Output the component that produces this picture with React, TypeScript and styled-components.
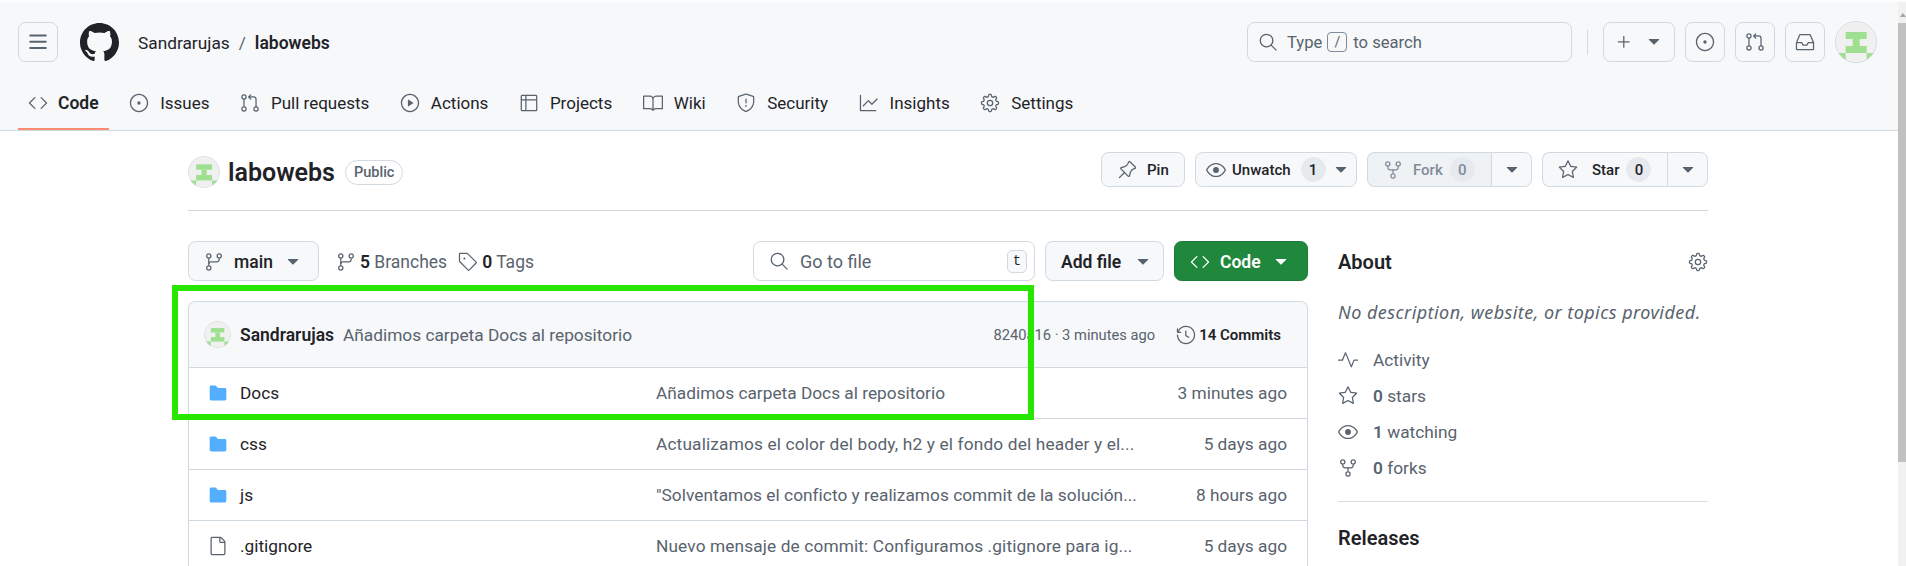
import React from "react";
import styled, { createGlobalStyle } from "styled-components";
import {
  GoCode, GoIssueOpened, GoGitPullRequest, GoPlay, GoTable, GoBook, GoShield,
  GoGraph, GoGear, GoSearch, GoPlus, GoTriangleDown, GoInbox, GoPin, GoEye, GoRepoForked, GoStar,
  GoGitBranch, GoTag, GoHistory, GoPulse, GoFileDirectoryFill, GoFile,
} from "react-icons/go";

const FONT = `Roboto, "Noto Sans", "Liberation Sans", sans-serif`;
const INK = "#1f2328";
const MUTED = "#59636e";
const LINE = "#d1d9e0";
const WASH = "#f6f8fa";

const Global = createGlobalStyle`
  html, body { margin: 0; padding: 0; height: 100%; overflow: hidden; background: #fff; }
  body { font-family: ${FONT}; font-size: 17.3px; color: ${INK}; }
  * { box-sizing: border-box; }
  svg { display: block; flex: none; }
`;

const Page = styled.div`
  position: relative;
  display: flex;
  width: 1906px;
  height: 566px;
  overflow: hidden;
`;
const Main = styled.div`
  flex: 1;
  min-width: 0;
`;
const Rail = styled.div`
  width: 8px;
  background: #f1f1f1;
  border-top: 2px solid #fdfcff;
  padding-top: 11px;
  display: flex;
  flex-direction: column;
  align-items: center;
`;
const RailArrow = styled.span`
  width: 0;
  height: 0;
  margin-left: 1px;
  border-left: 3px solid transparent;
  border-right: 3px solid transparent;
  border-bottom: 4px solid #a3a3a3;
`;
const Thumb = styled.div`
  align-self: stretch;
  height: 439px;
  margin-top: 6px;
  background: #c1c1c1;
`;
const Highlight = styled.div`
  position: absolute;
  left: 172px;
  top: 285px;
  width: 862px;
  height: 135px;
  border: 6px solid #27e600;
  pointer-events: none;
`;

const Header = styled.header`
  background: ${WASH};
  border-top: 2px solid #fdfcff;
  border-bottom: 1px solid ${LINE};
  height: 131px;
`;
const TopRow = styled.div`
  display: flex;
  align-items: center;
  height: 60px;
  padding: 20px 21px 0 18px;
`;
const IconBtn = styled.div`
  width: 40px;
  height: 40px;
  border: 1px solid ${LINE};
  border-radius: 7.5px;
  display: flex;
  align-items: center;
  justify-content: center;
  color: ${MUTED};
`;
const Logo = styled.div`
  margin-left: 22px;
  color: ${INK};
`;
const Crumbs = styled.div`
  margin-left: 19px;
  padding-top: 2px;
  display: flex;
  align-items: center;
  flex: 1;
`;
const Slash = styled.span`
  color: ${MUTED};
  margin: 0 9px;
`;
const Strong = styled.span`
  font-size: 17.5px;
  font-weight: 600;
`;
const SearchBox = styled.div`
  width: 325px;
  height: 40px;
  border: 1px solid ${LINE};
  border-radius: 7.5px;
  display: flex;
  align-items: center;
  padding-left: 10px;
  gap: 5px;
  color: ${MUTED};
`;
const SearchText = styled.span<{ $lead: number }>`
  font-size: 16.6px;
  padding-top: 1px;
  margin-left: ${(p) => p.$lead}px;
`;
const SlashKey = styled.span`
  width: 20px;
  height: 20px;
  border: 1px solid #818b98;
  border-radius: 4px;
  font-size: 14px;
  display: flex;
  align-items: center;
  justify-content: center;
`;
const Divider = styled.span`
  width: 1px;
  height: 25px;
  background: ${LINE};
  margin: 0 15px;
`;
const ToolGroup = styled.div`
  display: flex;
  align-items: center;
  gap: 10px;
`;
const PlusBtn = styled(IconBtn)`
  width: 72px;
  gap: 10px;
`;
const Avatar = styled.svg<{ $size: number }>`
  width: ${(p) => p.$size}px;
  height: ${(p) => p.$size}px;
  border-radius: 50%;
`;
const Tabs = styled.nav`
  display: flex;
  gap: 10.5px;
  padding: 21px 0 0 18px;
`;
const Tab = styled.div<{ $active?: boolean }>`
  display: flex;
  align-items: center;
  gap: ${(p) => (p.$active ? 10 : 11)}px;
  height: 47px;
  padding: 0 10px 5px;
  border-bottom: 2.5px solid ${(p) => (p.$active ? "#fd8c73" : "transparent")};
  font-size: ${(p) => (p.$active ? 17.5 : 17)}px;
  font-weight: ${(p) => (p.$active ? 600 : 400)};
  color: ${INK};
  svg { color: ${MUTED}; }
`;

const Container = styled.div`
  width: 1520px;
  margin-left: 188px;
`;
const RepoHead = styled.div`
  display: flex;
  justify-content: space-between;
  height: 80px;
  padding-top: 21px;
  border-bottom: 1px solid ${LINE};
`;
const RepoTitle = styled.div`
  display: flex;
  align-items: center;
  height: 40px;
  gap: 8px;
`;
const RepoName = styled.span`
  font-size: 25px;
  font-weight: 600;
  margin-right: 2px;
`;
const Badge = styled.span`
  height: 25px;
  padding: 0 8px;
  border: 1px solid ${LINE};
  border-radius: 13px;
  font-size: 14.5px;
  font-weight: 500;
  color: ${MUTED};
  display: flex;
  align-items: center;
`;
const Actions = styled.div`
  display: flex;
  gap: 10px;
  height: 35px;
`;
const SmallBtn = styled.div<{ $disabled?: boolean; $width?: number }>`
  display: flex;
  align-items: center;
  height: 35px;
  width: ${(p) => (p.$width ? `${p.$width}px` : "auto")};
  padding: 0 15px;
  gap: 10px;
  background: ${(p) => (p.$disabled ? "#eff2f5" : WASH)};
  color: ${(p) => (p.$disabled ? "#818b98" : INK)};
  border: 1px solid ${LINE};
  border-radius: 7.5px;
  font-size: 15px;
  font-weight: 500;
  svg { color: ${(p) => (p.$disabled ? "#818b98" : MUTED)}; }
`;
const MirrorPin = styled(GoPin)`
  transform: scaleX(-1);
`;
const Split = styled.div`
  display: flex;
`;
const SplitMain = styled(SmallBtn)<{ $iconGap: number }>`
  border-radius: 7.5px 0 0 7.5px;
  border-right: 0;
  gap: 7px;
  svg { margin-right: ${(p) => p.$iconGap}px; }
`;
const SplitCaret = styled(SmallBtn)`
  width: 41px;
  padding: 0;
  justify-content: center;
  border-radius: 0 7.5px 7.5px 0;
  background: ${WASH};
  svg { color: ${MUTED}; }
`;
const Counter = styled.span`
  min-width: 25px;
  height: 25px;
  padding: 0 6px;
  border-radius: 13px;
  background: #e6eaef;
  display: flex;
  align-items: center;
  justify-content: center;
`;
const WatchBtn = styled(SmallBtn)`
  padding: 0 0 0 10px;
  gap: 6px;
`;
const WatchCounter = styled(Counter)`
  margin: 0 -1px 0 4px;
`;

const Columns = styled.div`
  display: grid;
  grid-template-columns: 1120px 370px;
  column-gap: 30px;
  margin-top: 30px;
`;
const FileBar = styled.div`
  display: flex;
  align-items: center;
  height: 40px;
`;
const Btn = styled.div`
  display: flex;
  align-items: center;
  height: 40px;
  padding: 1px 15px 0;
  gap: 10px;
  background: ${WASH};
  border: 1px solid ${LINE};
  border-radius: 7.5px;
  font-size: 17.5px;
  font-weight: 600;
  white-space: nowrap;
  svg { color: ${MUTED}; }
`;
const BranchBtn = styled(Btn)`
  width: 131px;
  justify-content: space-between;
  font-weight: 500;
`;
const Stat = styled.span<{ $gap: number }>`
  display: flex;
  align-items: center;
  gap: 4px;
  font-size: 17.5px;
  padding-top: 1px;
  color: ${MUTED};
  margin-left: ${(p) => p.$gap}px;
  b { color: ${INK}; font-weight: 600; }
`;
const GoToFile = styled.div`
  margin-left: auto;
  width: 282px;
  height: 40px;
  border: 1px solid ${LINE};
  border-radius: 7.5px;
  display: flex;
  align-items: center;
  padding: 0 7px 0 15px;
  gap: 11px;
  color: ${MUTED};
`;
const GoText = styled.span`
  flex: 1;
  font-size: 18px;
  padding-top: 1px;
`;
const KeyT = styled.span`
  width: 20px;
  height: 23px;
  border: 1px solid ${LINE};
  border-radius: 5px;
  background: ${WASH};
  font-family: "Liberation Mono", monospace;
  font-size: 14px;
  color: ${INK};
  display: flex;
  align-items: center;
  justify-content: center;
`;
const AddBtn = styled(Btn)`
  margin-left: 10px;
  width: 119px;
  padding-right: 10px;
  justify-content: space-between;
`;
const CodeBtn = styled(Btn)`
  margin-left: 10px;
  width: 134px;
  background: #1f883d;
  border-color: #1c7a37;
  color: #fff;
  svg { color: #fff; }
`;
const FileBox = styled.div`
  margin-top: 20px;
  border: 1px solid ${LINE};
  border-radius: 7.5px 7.5px 0 0;
  border-bottom: 0;
`;
const CommitBar = styled.div`
  display: flex;
  align-items: center;
  height: 65px;
  background: ${WASH};
  border-radius: 7.5px 7.5px 0 0;
  padding: 0 26px 0 15px;
`;
const CommitAuthor = styled.span`
  font-size: 17.5px;
  font-weight: 600;
  margin-left: 9px;
`;
const CommitMsg = styled.span`
  color: ${MUTED};
  margin-left: 9px;
  flex: 1;
`;
const CommitMeta = styled.span`
  font-size: 14.7px;
  color: ${MUTED};
`;
const CommitCount = styled.span`
  display: flex;
  align-items: center;
  gap: 3px;
  margin-left: 21px;
  font-size: 15px;
  font-weight: 600;
  svg { color: ${MUTED}; }
`;
const Row = styled.div`
  display: grid;
  grid-template-columns: 448px 500px 1fr;
  align-items: center;
  height: 51px;
  padding: 0 20px 0 19px;
  border-top: 1px solid ${LINE};
`;
const NameCell = styled.div`
  display: flex;
  align-items: center;
  gap: 12px;
  svg { color: ${MUTED}; }
`;
const FolderIcon = styled(GoFileDirectoryFill)`
  && { color: #54aeff; }
`;
const MsgCell = styled.div<{ $track: number }>`
  color: ${MUTED};
  white-space: nowrap;
  letter-spacing: ${(p) => p.$track}px;
`;
const TimeCell = styled.div`
  color: ${MUTED};
  text-align: right;
`;

const Side = styled.aside``;
const AboutHead = styled.div`
  display: flex;
  justify-content: space-between;
  align-items: center;
  height: 42px;
  svg { color: ${MUTED}; }
`;
const SideTitle = styled.h2`
  margin: 0;
  font-size: 20px;
  font-weight: 600;
`;
const Desc = styled.p`
  margin: 16px 0 0;
  font-family: "Noto Sans", ${FONT};
  font-size: 18px;
  letter-spacing: 0.45px;
  font-style: italic;
  line-height: 26px;
  color: ${MUTED};
  white-space: nowrap;
`;
const SideList = styled.div`
  margin-top: 17px;
  padding-bottom: 15px;
  border-bottom: 1px solid #d8dee4;
`;
const SideItem = styled.div`
  display: flex;
  align-items: center;
  gap: 15px;
  height: 36px;
  color: ${MUTED};
  svg { color: ${MUTED}; }
  b { font-weight: 600; }
`;
const ReleasesTitle = styled(SideTitle)`
  margin-top: 24px;
`;

const Octicon = ({ size, d }: { size: number; d: string }) => (
  <svg width={size} height={size} viewBox="0 0 16 16" fill="currentColor"><path d={d} /></svg>
);
const BARS = "M1 2.75A.75.75 0 0 1 1.75 2h12.5a.75.75 0 0 1 0 1.5H1.75A.75.75 0 0 1 1 2.75Zm0 5A.75.75 0 0 1 1.75 7h12.5a.75.75 0 0 1 0 1.5H1.75A.75.75 0 0 1 1 7.75ZM1.75 12h12.5a.75.75 0 0 1 0 1.5H1.75a.75.75 0 0 1 0-1.5Z";
const MARK = "M8 0c4.42 0 8 3.58 8 8a8.013 8.013 0 0 1-5.45 7.59c-.4.08-.55-.17-.55-.38 0-.27.01-1.13.01-2.2 0-.75-.25-1.23-.54-1.48 1.78-.2 3.65-.88 3.65-3.95 0-.88-.31-1.59-.82-2.15.08-.2.36-1.02-.08-2.12 0 0-.67-.22-2.2.82-.64-.18-1.32-.27-2-.27-.68 0-1.36.09-2 .27-1.53-1.03-2.2-.82-2.2-.82-.44 1.1-.16 1.92-.08 2.12-.51.56-.82 1.28-.82 2.15 0 3.06 1.86 3.75 3.64 3.95-.23.2-.44.55-.51 1.07-.46.21-1.61.55-2.33-.66-.15-.24-.6-.83-1.23-.82-.67.01-.27.38.01.53.34.19.73.9.82 1.13.16.45.68 1.31 2.69.94 0 .67.01 1.3.01 1.49 0 .21-.15.45-.55.38A7.995 7.995 0 0 1 0 8c0-4.42 3.58-8 8-8Z";

const Identicon = ({ size }: { size: number }) => (
  <Avatar $size={size} viewBox="0 0 126 126">
    <circle cx="63" cy="63" r="63" fill="#f0f0f0" />
    <g fill="#9fdf90">
      <rect x="32" y="33" width="63" height="21" />
      <rect x="53" y="54" width="21" height="21" />
      <rect x="32" y="75" width="63" height="21" />
      <path d="M11 96h21v21H11zM95 96h21v21H95z" />
    </g>
    <circle cx="63" cy="63" r="62" fill="none" stroke="#d1d9e0" strokeWidth="3" />
  </Avatar>
);

const tabs: [React.ComponentType<{ size?: number }>, string][] = [
  [GoCode, "Code"], [GoIssueOpened, "Issues"], [GoGitPullRequest, "Pull requests"], [GoPlay, "Actions"],
  [GoTable, "Projects"], [GoBook, "Wiki"], [GoShield, "Security"], [GoGraph, "Insights"], [GoGear, "Settings"],
];

const rows = [
  { dir: true, name: "Docs", track: 0, msg: "Añadimos carpeta Docs al repositorio", time: "3 minutes ago" },
  { dir: true, name: "css", track: 0.15, msg: "Actualizamos el color del body, h2 y el fondo del header y el...", time: "5 days ago" },
  { dir: true, name: "js", track: 0.02, msg: "\"Solventamos el conficto y realizamos commit de la solución...", time: "8 hours ago" },
  { dir: false, name: ".gitignore", track: 0.12, msg: "Nuevo mensaje de commit: Configuramos .gitignore para ig...", time: "5 days ago" },
];

export default function App() {
  return (
    <>
      <Global />
      <Page>
        <Main>
          <Header>
            <TopRow>
              <IconBtn><Octicon size={20} d={BARS} /></IconBtn>
              <Logo><Octicon size={39} d={MARK} /></Logo>
              <Crumbs>
                <span>Sandrarujas</span>
                <Slash>/</Slash>
                <Strong>labowebs</Strong>
              </Crumbs>
              <SearchBox>
                <GoSearch size={20} />
                <SearchText $lead={4}>Type</SearchText>
                <SlashKey>/</SlashKey>
                <SearchText $lead={1}>to search</SearchText>
              </SearchBox>
              <Divider />
              <ToolGroup>
                <PlusBtn><GoPlus size={20} /><GoTriangleDown size={20} /></PlusBtn>
                <IconBtn><GoIssueOpened size={20} /></IconBtn>
                <IconBtn><GoGitPullRequest size={20} /></IconBtn>
                <IconBtn><GoInbox size={20} /></IconBtn>
                <Identicon size={42} />
              </ToolGroup>
            </TopRow>
            <Tabs>
              {tabs.map(([Icon, label], i) => (
                <Tab key={label} $active={i === 0}>
                  <Icon size={20} />
                  <span>{label}</span>
                </Tab>
              ))}
            </Tabs>
          </Header>
          <Container>
            <RepoHead>
              <RepoTitle>
                <Identicon size={32} />
                <RepoName>labowebs</RepoName>
                <Badge>Public</Badge>
              </RepoTitle>
              <Actions>
                <SmallBtn $width={84}><MirrorPin size={20} /><span>Pin</span></SmallBtn>
                <WatchBtn $width={162}>
                  <GoEye size={20} /><span>Unwatch</span><WatchCounter>1</WatchCounter><GoTriangleDown size={20} />
                </WatchBtn>
                <Split>
                  <SplitMain $disabled $width={124} $iconGap={3}><GoRepoForked size={20} /><span>Fork</span><Counter>0</Counter></SplitMain>
                  <SplitCaret><GoTriangleDown size={20} /></SplitCaret>
                </Split>
                <Split>
                  <SplitMain $width={125} $iconGap={7}><GoStar size={20} /><span>Star</span><Counter>0</Counter></SplitMain>
                  <SplitCaret><GoTriangleDown size={20} /></SplitCaret>
                </Split>
              </Actions>
            </RepoHead>
            <Columns>
              <div>
                <FileBar>
                  <BranchBtn><GoGitBranch size={20} /><span>main</span><GoTriangleDown size={20} /></BranchBtn>
                  <Stat $gap={17}><GoGitBranch size={20} /><span><b>5</b> Branches</span></Stat>
                  <Stat $gap={11}><GoTag size={20} /><span><b>0</b> Tags</span></Stat>
                  <GoToFile><GoSearch size={20} /><GoText>Go to file</GoText><KeyT>t</KeyT></GoToFile>
                  <AddBtn><span>Add file</span><GoTriangleDown size={20} /></AddBtn>
                  <CodeBtn><GoCode size={20} /><span>Code</span><GoTriangleDown size={20} /></CodeBtn>
                </FileBar>
                <FileBox>
                  <CommitBar>
                    <Identicon size={27} />
                    <CommitAuthor>Sandrarujas</CommitAuthor>
                    <CommitMsg>Añadimos carpeta Docs al repositorio</CommitMsg>
                    <CommitMeta>8240a16 · 3 minutes ago</CommitMeta>
                    <CommitCount><GoHistory size={20} /><span>14 Commits</span></CommitCount>
                  </CommitBar>
                  {rows.map((r) => (
                    <Row key={r.name}>
                      <NameCell>
                        {r.dir ? <FolderIcon size={20} /> : <GoFile size={20} />}
                        <span>{r.name}</span>
                      </NameCell>
                      <MsgCell $track={r.track}>{r.msg}</MsgCell>
                      <TimeCell>{r.time}</TimeCell>
                    </Row>
                  ))}
                </FileBox>
              </div>
              <Side>
                <AboutHead><SideTitle>About</SideTitle><GoGear size={20} /></AboutHead>
                <Desc>No description, website, or topics provided.</Desc>
                <SideList>
                  <SideItem><GoPulse size={20} /><span>Activity</span></SideItem>
                  <SideItem><GoStar size={20} /><span><b>0</b> stars</span></SideItem>
                  <SideItem><GoEye size={20} /><span><b>1</b> watching</span></SideItem>
                  <SideItem><GoRepoForked size={20} /><span><b>0</b> forks</span></SideItem>
                </SideList>
                <ReleasesTitle>Releases</ReleasesTitle>
              </Side>
            </Columns>
          </Container>
        </Main>
        <Rail><RailArrow /><Thumb /></Rail>
        <Highlight />
      </Page>
    </>
  );
}
